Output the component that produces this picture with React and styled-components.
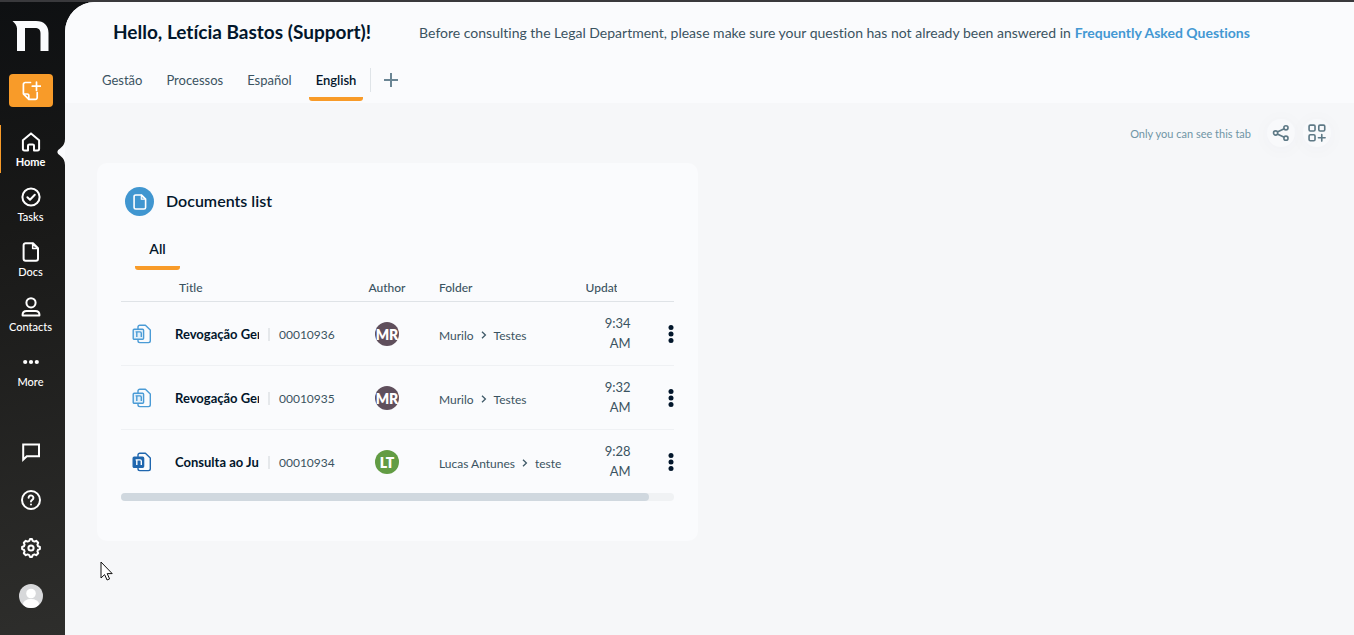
import React, { useState } from 'react'
import styled, { createGlobalStyle } from 'styled-components'

const navItems = [
    { id: 'home', label: 'Home' },
    { id: 'tasks', label: 'Tasks' },
    { id: 'docs', label: 'Docs' },
    { id: 'contacts', label: 'Contacts' },
    { id: 'more', label: 'More' },
]

const tabs = ['Gestão', 'Processos', 'Español', 'English']

const documents = [
    { id: '00010936', title: 'Revogação Ger', author: 'MR', color: '#5f4f5c', path: ['Murilo', 'Testes'], time: '9:34 AM' },
    { id: '00010935', title: 'Revogação Ger', author: 'MR', color: '#5f4f5c', path: ['Murilo', 'Testes'], time: '9:32 AM' },
    { id: '00010934', title: 'Consulta ao Ju', author: 'LT', color: '#629c44', path: ['Lucas Antunes', 'teste'], time: '9:28 AM', filled: true },
]

const Icon = ({ size = 20, children, ...rest }) => (
    <svg width={size} height={size} viewBox="0 0 20 20" fill="none" stroke="currentColor"
        strokeWidth="2" strokeLinecap="round" strokeLinejoin="round" aria-hidden="true" {...rest}>
        {children}
    </svg>
)

const FileIcon = (props) => (
    <Icon {...props}>
        <path d="M4.6 1.2H12L17 6.2V16.8a2 2 0 0 1-2 2H4.6a2 2 0 0 1-2-2V3.2a2 2 0 0 1 2-2Z" />
        <path d="M11.6 1.5V6.6H16.8Z" fill="currentColor" fillOpacity=".35" strokeWidth="1.4" />
    </Icon>
)

const navIcons = {
    home: (
        <Icon>
            <path d="M1.9 8.2 10 1.4l8.1 6.8v8.6a1.6 1.6 0 0 1-1.6 1.6H13v-4.6a1.4 1.4 0 0 0-1.4-1.4H8.4A1.4 1.4 0 0 0 7 13.8v4.6H3.5a1.6 1.6 0 0 1-1.6-1.6Z" />
        </Icon>
    ),
    tasks: (
        <Icon>
            <circle cx="10" cy="10" r="8.6" />
            <path d="m6.4 10.2 2.6 2.5 4.8-5" />
        </Icon>
    ),
    docs: <FileIcon />,
    contacts: (
        <Icon>
            <circle cx="10" cy="5.8" r="4.6" />
            <path d="M1.6 18.6v-1c0-2.2 1.7-3.7 4-3.7h8.8c2.3 0 4 1.5 4 3.7v1Z" />
        </Icon>
    ),
    more: (
        <Icon fill="currentColor" stroke="none">
            <circle cx="4.2" cy="10" r="2.1" />
            <circle cx="10" cy="10" r="2.1" />
            <circle cx="15.8" cy="10" r="2.1" />
        </Icon>
    ),
}

const DocIcon = ({ filled }) => (
    <svg width="20" height="20" viewBox="0 0 20 20" fill="none" stroke={filled ? '#1f66ae' : '#4a9bd6'}
        strokeWidth="1.4" strokeLinejoin="round" aria-hidden="true">
        <path d="M6 5V3a1.8 1.8 0 0 1 1.8-1.8H13.4L18.3 6v10.8a1.8 1.8 0 0 1-1.8 1.8H7.8A1.8 1.8 0 0 1 6 16.8V15.6" />
        <rect x="1.2" y="5.3" width="10.4" height="10" rx="1" fill={filled ? '#1f66ae' : '#e3f0fa'} />
        <path d="M3.6 7.9H8q1.3 0 1.3 1.3V13M4.8 8.2V13" stroke={filled ? '#fff' : '#4a9bd6'} />
    </svg>
)

const DocumentRow = ({ item }) => (
    <tr>
        <IconCell><DocIcon filled={item.filled} /></IconCell>
        <td>
            <TitleGroup>
                <DocTitle href="#">{item.title}</DocTitle>
                <DocNumber>{item.id}</DocNumber>
            </TitleGroup>
        </td>
        <td><Author $color={item.color}>{item.author}</Author></td>
        <FolderCell>
            <FolderPath>
                <span>{item.path[0]}</span>
                <svg width="6" height="8" viewBox="0 0 6 8" fill="none" stroke="#3f5a68" strokeWidth="1.3" aria-hidden="true">
                    <path d="m1 .8 3.4 3.2L1 7.2" />
                </svg>
                <span>{item.path[1]}</span>
            </FolderPath>
        </FolderCell>
        <TimeCell><time>{item.time}</time></TimeCell>
        <MenuCell>
            <MenuButton aria-label={`Options for ${item.id}`}>
                <svg width="6" height="20" viewBox="0 0 6 20" fill="#02162b">
                    <circle cx="3" cy="3.5" r="2.5" />
                    <circle cx="3" cy="10" r="2.5" />
                    <circle cx="3" cy="16.5" r="2.5" />
                </svg>
            </MenuButton>
        </MenuCell>
    </tr>
)

const Sidebar = () => (
    <SidebarWrap>
        <Logo href="#" aria-label="Home page">
            <svg width="38" height="32" viewBox="0 0 38 32" fill="#fafbfd">
                <path d="M.5 1H24C32 1 36.5 5.6 36.5 13V31H28.5V13.5C28.5 9.5 26.5 8 23 8H13V31H5V8.5C5 5.5 3 3.5 .5 1Z" />
            </svg>
        </Logo>
        <CreateButton aria-label="Create">
            <Icon stroke="#fff" strokeWidth="1.7">
                <path d="M9.500 1.500H4.200A1.800 1.800 0 0 0 2.400 3.300v9.500l5.400 5.600h6.600a1.800 1.800 0 0 0 1.800-1.800V11.500" />
                <path d="M2.800 13H6.200a1.600 1.600 0 0 1 1.600 1.600v3.400" />
                <path d="M15.500 1v8.400M11.300 5.200h8.400" />
            </Icon>
        </CreateButton>
        <Nav>
            {navItems.map((item) => (
                <NavItem key={item.id} href="#" $active={item.id === 'home'}>
                    {navIcons[item.id]}
                    <span>{item.label}</span>
                    {item.id === 'home' && (
                        <Notch width="8" height="26" viewBox="0 0 8 26" aria-hidden="true">
                            <path d="M8 0C8 8 1.5 9.5 .6 12Q.2 13 .6 14C1.5 16.5 8 18 8 26Z" fill="#fafbfd" />
                        </Notch>
                    )}
                </NavItem>
            ))}
        </Nav>
        <Tools>
            <ToolButton aria-label="Messages">
                <Icon strokeLinejoin="miter">
                    <path d="M2.2 17.6V2.6H18V14.2H5.8Z" />
                </Icon>
            </ToolButton>
            <ToolButton aria-label="Help">
                <Icon>
                    <circle cx="10" cy="10" r="9" />
                    <path d="M7.6 7.8a2.4 2.4 0 1 1 3.600 2.100c-.8.5-1.200.9-1.200 1.700" />
                    <path d="M10 14.4v.1" />
                </Icon>
            </ToolButton>
            <ToolButton aria-label="Settings">
                <Icon>
                    <circle cx="10" cy="10" r="2.6" />
                    <path d="M8.3 2.9 9 1.1h2l.7 1.8 1.7.7 1.8-.8 2 2-.8 1.8.7 1.7 1.8.7v2l-1.8.7-.7 1.7.8 1.8-2 2-1.8-.8-1.7.7-.7 1.8H9l-.7-1.8-1.7-.7-1.8.8-2-2 .8-1.8-.7-1.700L1.100 11V9l1.800-.7.7-1.700-.8-1.800 2-2 1.800.8Z" />
                </Icon>
            </ToolButton>
            <ToolButton aria-label="Profile">
                <svg width="24" height="24" viewBox="0 0 24 24">
                    <clipPath id="avatar"><circle cx="12" cy="12" r="12" /></clipPath>
                    <g clipPath="url(#avatar)" fill="#fff">
                        <rect width="24" height="24" fill="#d7d8da" />
                        <circle cx="12" cy="9.5" r="4.8" />
                        <ellipse cx="12" cy="20" rx="8" ry="5" />
                    </g>
                </svg>
            </ToolButton>
        </Tools>
    </SidebarWrap>
)

const DocumentsCard = () => (
    <Card>
        <CardHeader>
            <CardIcon><FileIcon size={16} /></CardIcon>
            <CardTitle>Documents list</CardTitle>
        </CardHeader>
        <CardTabs><CardTab>All</CardTab></CardTabs>
        <Table>
            <colgroup>
                <Col $width={54} />
                <Col $width={184} />
                <Col $width={56} />
                <col />
                <Col $width={45} />
                <Col $width={43} />
            </colgroup>
            <thead>
                <tr>
                    <th aria-label="Type" />
                    <TitleHead>Title</TitleHead>
                    <AuthorHead>Author</AuthorHead>
                    <FolderHead>Folder</FolderHead>
                    <th><Clipped>Update</Clipped></th>
                    <th aria-label="Options" />
                </tr>
            </thead>
            <tbody>
                {documents.map((item) => <DocumentRow key={item.id} item={item} />)}
            </tbody>
        </Table>
        <ScrollTrack><ScrollThumb /></ScrollTrack>
    </Card>
)

const App = () => {
    const [active, setActive] = useState('English')
    return (
        <Page>
            <GlobalStyle />
            <Sidebar />
            <Main>
                <TopBar>
                    <Greeting>
                        <h1>Hello, Letícia Bastos (Support)!</h1>
                        <p>
                            Before consulting the Legal Department, please make sure your question has not already been answered in
                            <a href="#">Frequently Asked Questions</a>
                        </p>
                    </Greeting>
                    <TabList>
                        {tabs.map((tab) => (
                            <Tab key={tab} $active={tab === active} onClick={() => setActive(tab)}>{tab}</Tab>
                        ))}
                        <AddTab aria-label="Add tab">
                            <svg width="14" height="14" viewBox="0 0 14 14" stroke="#6a8594" strokeWidth="2">
                                <path d="M7 0v14M0 7h14" />
                            </svg>
                        </AddTab>
                    </TabList>
                </TopBar>
                <ActionBar>
                    <span>Only you can see this tab</span>
                    <RoundButton aria-label="Share">
                        <Icon size={18} stroke="#5e7986" strokeWidth="1.8">
                            <circle cx="4" cy="10" r="2.3" />
                            <circle cx="15.5" cy="4.2" r="2.3" />
                            <circle cx="15.5" cy="15.8" r="2.3" />
                            <path d="m6.4 8.7 6.6-3.2M6.4 11.3l6.6 3.2" />
                        </Icon>
                    </RoundButton>
                    <RoundButton aria-label="Add widget">
                        <Icon size={18} stroke="#5e7986" strokeWidth="1.8">
                            <rect x="1.2" y="1.2" width="6.6" height="6.6" rx="1.4" />
                            <rect x="12" y="1.2" width="6.6" height="6.6" rx="1.4" />
                            <rect x="1.2" y="12" width="6.6" height="6.6" rx="1.4" />
                            <path d="M15.3 11.6v7.4M11.6 15.3H19" />
                        </Icon>
                    </RoundButton>
                </ActionBar>
                <Widgets>
                    <DocumentsCard />
                </Widgets>
            </Main>
            <Pointer width="13" height="20" viewBox="0 0 13 20" aria-hidden="true">
                <path d="M1 1V17L4.6 13.6 7.1 19 9.6 17.9 7.2 12.6H12.2Z" fill="#fff" stroke="#111" />
            </Pointer>
        </Page>
    )
}

const GlobalStyle = createGlobalStyle`
    * {
        box-sizing: border-box;
    }

    body {
        margin: 0;
        font-family: Lato, "Open Sans", sans-serif;
        font-size: 13px;
        font-variant-ligatures: none;
        color: #3a5361;
    }

    button {
        border: 0;
        padding: 0;
        background: none;
        font: inherit;
        font-variant-ligatures: none;
        color: inherit;
        cursor: pointer;
    }

    a {
        color: inherit;
        text-decoration: none;
    }
`

const Page = styled.div`
    display: flex;
    min-height: 100vh;
    border-top: 2px solid #39393c;
    background: linear-gradient(170deg, #0e1012 0%, #191918 35%, #2e2e2c 100%) left / 96px 100% no-repeat #f6f7f9;
`

const SidebarWrap = styled.aside`
    display: flex;
    flex-direction: column;
    align-items: center;
    width: 65px;
    flex-shrink: 0;
    padding: 18px 4px 27px 0;
    color: #fff;
`

const Logo = styled.a`
    display: flex;
    height: 32px;
`

const CreateButton = styled.button`
    display: flex;
    align-items: center;
    justify-content: center;
    width: 44px;
    height: 33px;
    margin-top: 22px;
    border-radius: 4px;
    background: #f89b29;
`

const Nav = styled.nav`
    display: flex;
    flex-direction: column;
    gap: 7px;
    align-self: stretch;
    margin-top: 18px;
    /* reaches the edge of the content so the notch can touch it */
    margin-right: -4px;
`

const NavItem = styled.a`
    position: relative;
    display: flex;
    flex-direction: column;
    align-items: center;
    gap: 2px;
    height: 48px;
    padding: 7px 4px 0 0;
    box-shadow: ${({ $active }) => ($active ? 'inset 1px 0 #f89b29' : 'none')};
    font-size: 11px;
    font-weight: ${({ $active }) => ($active ? 700 : 500)};
    line-height: 16px;
`

const Notch = styled.svg`
    position: absolute;
    right: 0;
    top: 14px;
`

const Tools = styled.div`
    display: flex;
    flex-direction: column;
    align-items: center;
    gap: 24px;
    margin-top: auto;
`

const ToolButton = styled.button`
    display: flex;
    align-items: center;
    justify-content: center;
    height: 24px;
`

const Main = styled.main`
    flex: 1;
    min-width: 0;
    border-top-left-radius: 30px;
    background: #f6f7f9;
`

const TopBar = styled.header`
    border-top-left-radius: 30px;
    background: #fafbfd;
`

const Greeting = styled.div`
    display: flex;
    align-items: center;
    gap: 48px;
    padding: 17px 24px 0 48px;

    h1 {
        margin: 0;
        font-size: 19px;
        font-weight: 700;
        line-height: 26px;
        color: #02162b;
        white-space: nowrap;
    }

    p {
        margin: 0;
        padding-top: 2px;
        font-size: 14px;
        line-height: 24px;
    }

    a {
        margin-left: 4px;
        font-weight: 700;
        color: #4398d3;
    }
`

const TabList = styled.div`
    display: flex;
    align-items: flex-start;
    gap: 10px;
    padding: 20px 30px 2px;
`

const Tab = styled.button`
    height: 36px;
    padding: 0 7px 6px;
    background: ${({ $active }) => ($active
        ? 'linear-gradient(#f89b29, #f89b29) bottom / 100% 4px no-repeat'
        : 'none')};
    border-radius: 3px;
    color: ${({ $active }) => ($active ? '#02162b' : '#3a5361')};
    font-weight: ${({ $active }) => ($active ? 600 : 400)};
    line-height: 20px;
`

const AddTab = styled.button`
    display: flex;
    align-items: center;
    height: 24px;
    margin: 3px 0 0 -3px;
    padding-left: 13px;
    border-left: 1px solid #dfe4e8;
`

const ActionBar = styled.div`
    display: flex;
    align-items: center;
    justify-content: flex-end;
    gap: 8px;
    padding: 16px 23px 0;
    font-size: 11px;
    color: #6f95a5;

    span {
        margin-right: 8px;
    }
`

const RoundButton = styled.button`
    display: flex;
    align-items: center;
    justify-content: center;
    width: 28px;
    height: 28px;
    border-radius: 50%;
    background: #f8f9fb;
    box-shadow: 0 2px 16px 4px rgba(30, 60, 90, 0.02);
`

const Widgets = styled.section`
    display: grid;
    grid-template-columns: 1fr 1fr;
    gap: 24px;
    padding: 16px 32px 32px;
`

const Card = styled.article`
    min-width: 0;
    padding: 24px 24px 40px;
    border-radius: 10px;
    background: #fafbfd;
`

const CardHeader = styled.div`
    display: flex;
    align-items: center;
    gap: 12px;
    padding-left: 4px;
`

const CardIcon = styled.span`
    display: flex;
    align-items: center;
    justify-content: center;
    width: 29px;
    height: 29px;
    border-radius: 50%;
    background: #4096d0;
    color: #fff;
`

const CardTitle = styled.h2`
    margin: 0;
    padding-bottom: 2px;
    font-size: 16px;
    font-weight: 600;
    line-height: 20px;
    color: #02162b;
`

const CardTabs = styled.div`
    display: flex;
    margin-top: 23px;
    padding-left: 14px;
`

const CardTab = styled(Tab).attrs({ $active: true })`
    width: 45px;
    height: 31px;
    padding-bottom: 11px;
    font-size: 14px;
`

const Table = styled.table`
    width: 100%;
    table-layout: fixed;
    border-collapse: collapse;

    th {
        height: 31px;
        padding: 4px 0 0;
        border-bottom: 1px solid #dfe3e7;
        font-size: 12px;
        font-weight: 500;
        text-align: left;
    }

    td {
        height: 64px;
        padding: 2px 0 0;
        border-bottom: 1px solid #eff1f4;
    }

    tr:last-child td {
        border-bottom: 0;
    }
`

const Col = styled.col`
    width: ${({ $width }) => $width}px;
`

const TitleHead = styled.th`
    text-indent: 4px;
`

const AuthorHead = styled.th`
    && {
        text-align: center;
    }
`

const FolderHead = styled.th`
    text-indent: 24px;
`

const Clipped = styled.div`
    width: 31px;
    overflow: hidden;
`

const IconCell = styled.td`
    text-indent: 11px;

    svg {
        display: inline-block;
        vertical-align: middle;
    }
`

const TitleGroup = styled.div`
    display: flex;
    align-items: center;
    gap: 9px;
`

const DocTitle = styled.a`
    width: 84px;
    overflow: hidden;
    white-space: nowrap;
    font-weight: 700;
    line-height: 20px;
    color: #02162b;
`

const DocNumber = styled.span`
    padding-left: 9px;
    border-left: 2px solid #e5e8eb;
    font-size: 12px;
    line-height: 13px;
`

const Author = styled.span`
    display: flex;
    align-items: center;
    justify-content: center;
    width: 24px;
    height: 24px;
    margin: 0 auto;
    border-radius: 50%;
    background: ${({ $color }) => $color};
    color: #fff;
    font-size: 14px;
    font-weight: 800;
`

const FolderCell = styled.td`
    font-size: 12px;
`

const FolderPath = styled.div`
    display: flex;
    align-items: center;
    gap: 7px;
    padding: 2px 0 0 24px;
`

const TimeCell = styled.td`
    font-size: 13px;
    line-height: 20px;
    text-align: right;

    time {
        display: block;
        padding: 0 0 2px 10px;
    }
`

const MenuCell = styled.td`
    text-align: right;
`

const MenuButton = styled.button`
    vertical-align: middle;

    svg {
        display: block;
    }
`

const ScrollTrack = styled.div`
    height: 8px;
    border-radius: 4px;
    background: #f0f2f4;
`

const ScrollThumb = styled.div`
    width: calc(100% - 25px);
    height: 8px;
    border-radius: 4px;
    background: #d0d8df;
`

/* mouse pointer floating over the page */
const Pointer = styled.svg`
    position: absolute;
    left: 100px;
    top: 561px;
    pointer-events: none;
`

export default App
